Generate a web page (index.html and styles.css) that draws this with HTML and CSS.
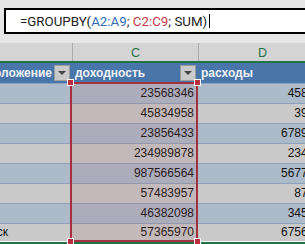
FILE: index.html
```html
<!DOCTYPE html>
<html lang="ru">
<head>
    <meta charset="UTF-8">
    <title>GROUPBY</title>
    <link rel="stylesheet" href="styles.css">
</head>
<body>

<div class="formula-bar">
    <div class="name-box"></div>
    <div class="formula-input">=GROUPBY(<span class="ref-a">A2:A9</span>; <span class="ref-c">C2:C9</span>; SUM)<span class="caret"></span></div>
</div>

<div class="col-heads">
    <div class="col-head head-b"></div>
    <div class="col-head head-c">C</div>
    <div class="col-head head-d">D</div>
</div>

<div class="sheet">
    <div class="row head-row">
        <div class="cell col-b">положение<span class="filter"></span></div>
        <div class="cell col-c">доходность<span class="filter"></span></div>
        <div class="cell col-d">расходы</div>
    </div>
    <div class="row band">
        <div class="cell col-b"></div>
        <div class="cell col-c">23568346</div>
        <div class="cell col-d">45834</div>
    </div>
    <div class="row">
        <div class="cell col-b"></div>
        <div class="cell col-c">45834958</div>
        <div class="cell col-d">3945</div>
    </div>
    <div class="row band">
        <div class="cell col-b"></div>
        <div class="cell col-c">23856433</div>
        <div class="cell col-d">678945</div>
    </div>
    <div class="row">
        <div class="cell col-b"></div>
        <div class="cell col-c">234989878</div>
        <div class="cell col-d">23456</div>
    </div>
    <div class="row band">
        <div class="cell col-b"></div>
        <div class="cell col-c">987566564</div>
        <div class="cell col-d">567734</div>
    </div>
    <div class="row">
        <div class="cell col-b"></div>
        <div class="cell col-c">57483957</div>
        <div class="cell col-d">8734</div>
    </div>
    <div class="row band">
        <div class="cell col-b"></div>
        <div class="cell col-c">46382098</div>
        <div class="cell col-d">34567</div>
    </div>
    <div class="row last">
        <div class="cell col-b city">Новосибирск</div>
        <div class="cell col-c">57365970</div>
        <div class="cell col-d">675634</div>
    </div>

    <!-- reference highlight for C2:C9 -->
    <div class="selection">
        <span class="handle tl"></span>
        <span class="handle tr"></span>
        <span class="handle bl"></span>
        <span class="handle br"></span>
    </div>
</div>

<div class="sheet-bottom"></div>

</body>
</html>
```

FILE: styles.css
```css
body {
    margin: 0;
    padding: 0;
    width: 305px;
    height: 244px;
    overflow: hidden;
    background-color: #e6e6e6;
    font-family: "Liberation Sans", Arial, sans-serif;
    color: #111;
}

/* formula bar */
.formula-bar {
    display: flex;
    height: 43px;
    padding-top: 8px;
    box-sizing: border-box;
    background-color: #e6e6e6;
}

.name-box {
    width: 6px;
    height: 26px;
    background-color: #fff;
}

.formula-input {
    flex: none;
    width: 320px;
    height: 26px;
    margin-left: 4px;
    padding: 2px 0 0 14px;
    box-sizing: border-box;
    border: 2px solid #000;
    background-color: #fff;
    font-family: Roboto, "Liberation Sans", sans-serif;
    font-size: 13.3px;
    line-height: 20px;
    color: #222;
    white-space: nowrap;
}

.ref-a {
    color: #2f6db3;
}

.ref-c {
    color: #c3384a;
}

.caret {
    display: inline-block;
    width: 1px;
    height: 14px;
    margin-left: 2px;
    vertical-align: -2px;
    background-color: #000;
}

/* column letters */
.col-heads {
    display: flex;
    height: 20px;
    box-sizing: border-box;
    background-color: #d4d4d4;
    border-bottom: 2px solid #217346;
}

.col-head {
    flex: none;
    box-sizing: border-box;
    padding-top: 3px;
    line-height: 15px;
    font-size: 12.5px;
    text-align: center;
    color: #217346;
}

.head-b {
    width: 73px;
    border-right: 1px solid #ababab;
}

.head-c {
    width: 126px;
    border-right: 1px solid #ababab;
}

.head-d {
    width: 127px;
}

/* table */
.sheet {
    position: relative;
    width: 326px;
}

.row {
    display: flex;
    height: 20px;
    box-sizing: border-box;
    border-top: 1px solid #8ea1b8;
    background-color: #c9c9c9;
    font-size: 12px;
    line-height: 19px;
}

.row.band {
    background-color: #adbac9;
}

.row.last {
    height: 18px;
}

.head-row {
    border-top: none;
    background-color: #4876aa;
    color: #eef1f5;
    font-weight: bold;
    line-height: 20px;
}

.cell {
    flex: none;
    display: flex;
    align-items: center;
    box-sizing: border-box;
    overflow: hidden;
    white-space: nowrap;
}

.col-b {
    width: 72px;
    justify-content: flex-end;
    padding-right: 2px;
}

.col-c {
    width: 126px;
    justify-content: flex-end;
    padding-right: 4px;
}

.col-d {
    width: 128px;
    justify-content: flex-end;
    padding-right: 5px;
}

.head-row .col-c {
    justify-content: space-between;
    padding-left: 3px;
    padding-right: 2px;
}

.head-row .col-d {
    justify-content: flex-start;
    padding-left: 3px;
}

.col-b.city {
    padding-right: 64px;
}

.filter {
    position: relative;
    flex: none;
    width: 16px;
    height: 16px;
    margin-left: 2px;
    box-sizing: border-box;
    border: 1px solid #9c9c9c;
    background-color: #cacaca;
}

.filter::after {
    content: "";
    position: absolute;
    left: 3px;
    top: 5px;
    border-left: 4px solid transparent;
    border-right: 4px solid transparent;
    border-top: 4px solid #444;
}

/* C2:C9 highlight */
.selection {
    position: absolute;
    left: 70px;
    top: 19px;
    width: 128px;
    height: 160px;
    box-sizing: border-box;
    border: 2px solid #a5303d;
    background-color: rgba(170, 90, 100, 0.14);
    pointer-events: none;
}

.handle {
    position: absolute;
    width: 5px;
    height: 5px;
    border: 1px solid #fff;
    background-color: #b8303d;
}

.handle.tl { left: -5px; top: -5px; }
.handle.tr { right: -5px; top: -5px; }
.handle.bl { left: -5px; bottom: -5px; }
.handle.br { right: -5px; bottom: -5px; }

.sheet-bottom {
    height: 3px;
    border-top: 1px solid #fff;
    background-color: #217346;
}
```
